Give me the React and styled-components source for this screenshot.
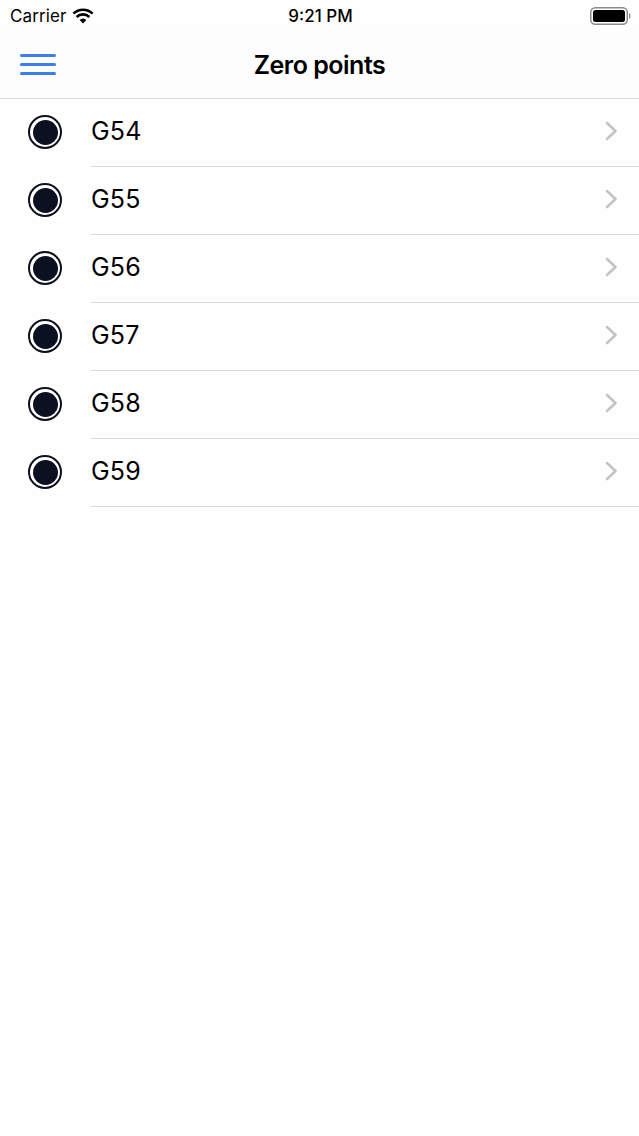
import React from "react";
import styled, { createGlobalStyle } from "styled-components";

const GlobalStyle = createGlobalStyle`
	html, body {
		margin: 0;
		padding: 0;
		background: #fefefe;
	}
	body {
		font-family: Inter, "Liberation Sans", sans-serif;
		color: #000;
	}
`;

const Screen = styled.div`
	width: 639px;
	min-height: 1136px;
	background: #fefefe;
	display: flex;
	flex-direction: column;
`;

const StatusBar = styled.div`
	height: 31px;
	display: grid;
	grid-template-columns: 1fr auto 1fr;
	align-items: center;
	padding: 0 8px 0 10px;
	font-size: 17px;
`;

const StatusLeft = styled.div`
	display: flex;
	align-items: center;
	gap: 6px;
	letter-spacing: 0.1px;
`;

const StatusTime = styled.div`
	font-weight: 500;
	font-size: 17px;
`;

const StatusRight = styled.div`
	display: flex;
	justify-content: flex-end;
	align-items: center;
`;

const NavBar = styled.div`
	height: 67px;
	display: grid;
	grid-template-columns: 80px 1fr 80px;
	align-items: center;
	border-bottom: 1px solid #dcdcde;
	background: #fdfdfd;
`;

const MenuButton = styled.button`
	border: none;
	background: none;
	padding: 0 0 0 20px;
	display: flex;
	flex-direction: column;
	gap: 6px;
	cursor: pointer;
	span {
		display: block;
		width: 36px;
		height: 3px;
		border-radius: 1.5px;
		background: #3b7fe8;
	}
`;

const Title = styled.h1`
	margin: 0;
	text-align: center;
	font-size: 25px;
	font-weight: 600;
	letter-spacing: -0.5px;
`;

const List = styled.ul`
	list-style: none;
	margin: 0;
	padding: 0;
`;

const Row = styled.li`
	height: 68px;
	display: flex;
	align-items: center;
`;

const IconCell = styled.div`
	width: 91px;
	display: flex;
	padding: 0 0 2px 28px;
	box-sizing: border-box;
`;

const Radio = styled.div`
	width: 34px;
	height: 34px;
	border-radius: 50%;
	box-sizing: border-box;
	border: 2.5px solid #0c0f1c;
	padding: 2.5px;
	background: #fff;
	&::after {
		content: "";
		display: block;
		width: 100%;
		height: 100%;
		border-radius: 50%;
		background: #0c1122;
	}
`;

const RowBody = styled.div`
	flex: 1;
	align-self: stretch;
	display: flex;
	align-items: center;
	justify-content: space-between;
	padding: 0 21px 3px 0;
	border-bottom: 1px solid #dcdcde;
`;

const Label = styled.span`
	font-size: 25px;
	letter-spacing: 0.2px;
`;

const Chevron = () => (
	<svg width="13" height="20" viewBox="0 0 13 20">
		<path d="M2 2 L10.5 10 L2 18" fill="none" stroke="#c4c4c8" strokeWidth="2.6" strokeLinecap="round" strokeLinejoin="round" />
	</svg>
);

const Wifi = () => (
	<svg width="22" height="16" viewBox="0 0 22 16">
		<path d="M11 15.5 L7.6 12 A5 5 0 0 1 14.4 12 Z" fill="#000" />
		<path d="M4.6 9 A9.2 9.2 0 0 1 17.4 9" fill="none" stroke="#000" strokeWidth="2.6" />
		<path d="M1.4 5.6 A13.8 13.8 0 0 1 20.6 5.6" fill="none" stroke="#000" strokeWidth="2.6" />
	</svg>
);

const Battery = () => (
	<svg width="41" height="18" viewBox="0 0 41 18">
		<rect x="0.75" y="0.75" width="36.5" height="16.5" rx="4.5" fill="none" stroke="#8a8a8a" strokeWidth="1.5" />
		<rect x="3" y="3" width="32" height="12" rx="2.5" fill="#000" />
		<path d="M39 6 Q40.5 6.5 40.5 9 Q40.5 11.5 39 12 Z" fill="#8a8a8a" />
	</svg>
);

const points = ["G54", "G55", "G56", "G57", "G58", "G59"];

const App = () => {
	return (
		<Screen>
			<GlobalStyle />
			<StatusBar>
				<StatusLeft>
					Carrier
					<Wifi />
				</StatusLeft>
				<StatusTime>9:21 PM</StatusTime>
				<StatusRight>
					<Battery />
				</StatusRight>
			</StatusBar>
			<NavBar>
				<MenuButton aria-label="Menu">
					<span />
					<span />
					<span />
				</MenuButton>
				<Title>Zero points</Title>
				<div />
			</NavBar>
			<List>
				{points.map((p) => (
					<Row key={p}>
						<IconCell>
							<Radio />
						</IconCell>
						<RowBody>
							<Label>{p}</Label>
							<Chevron />
						</RowBody>
					</Row>
				))}
			</List>
		</Screen>
	);
};

export default App;
